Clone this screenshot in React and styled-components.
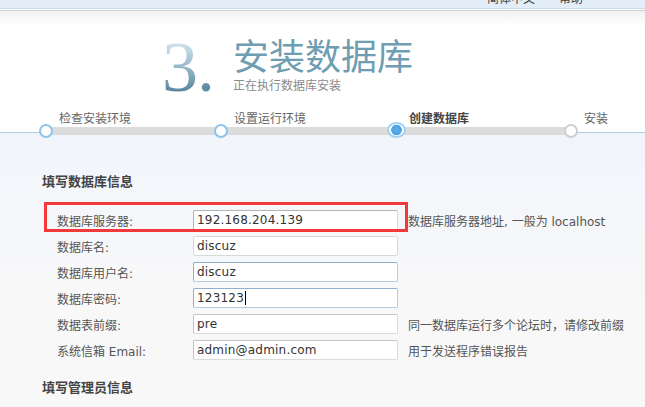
import React from "react";
import styled, { createGlobalStyle, css } from "styled-components";

const GlobalStyle = createGlobalStyle`
  html, body {
    margin: 0;
    padding: 0;
    background: #f8f8f8;
  }
  body {
    font-family: "DejaVu Sans", "Noto Sans CJK SC", sans-serif;
    font-size: 12px;
    color: #555;
  }
`;

const Page = styled.div`
  width: 645px;
  height: 407px;
  overflow: hidden;
`;

// top strip, mostly cut off
const TopBar = styled.div`
  height: 8px;
  background: #e3edf8;
  border-bottom: 1px solid #cddcee;
  overflow: hidden;
  display: flex;
  justify-content: flex-end;
  padding-right: 62px;
  gap: 24px;
`;

const TopLink = styled.span`
  margin-top: -9px;
  line-height: 14px;
  color: #444;
  font-family: "Noto Sans CJK SC", sans-serif;
`;

const Header = styled.div`
  margin-top: 1px;
  height: 121px;
  border-top: 1px solid #d3d3d3;
  border-bottom: 1px solid #aecde4;
  background: linear-gradient(#f2f2f2 0, #ffffff 16px);
  display: flex;
  flex-direction: column;
`;

const TitleBlock = styled.div`
  display: flex;
  align-items: flex-start;
  padding: 20px 0 0 162px;
`;

const Num = styled.div`
  font-family: "Liberation Serif", serif;
  font-size: 72px;
  line-height: 72px;
  letter-spacing: -1px;
  background: linear-gradient(#cfe0ea 18%, #8fb3c6 55%, #4f7f98 88%);
  -webkit-background-clip: text;
  background-clip: text;
  color: transparent;
`;

const TitleText = styled.div`
  margin-left: 19px;
  padding-top: 5px;
  display: flex;
  flex-direction: column;
`;

const Title = styled.h1`
  margin: 0;
  font-family: "Noto Sans CJK SC", sans-serif;
  font-weight: 400;
  font-size: 36px;
  line-height: 36px;
  color: #6f9db1;
`;

const SubTitle = styled.div`
  margin-top: 6px;
  font-family: "Noto Sans CJK SC", sans-serif;
  font-size: 12px;
  line-height: 14px;
  color: #8a8a8a;
`;

const Steps = styled.div`
  position: relative;
  z-index: 1;
  margin-top: auto;
  margin-bottom: -6px;
  height: 28px;
  display: flex;
  padding-left: 39px;

  &::before {
    content: "";
    position: absolute;
    left: 46px;
    width: 525px;
    top: 17px;
    height: 8px;
    background: #dcdcdc;
  }
`;

const Step = styled.div`
  position: relative;
  flex: 0 0 175px;
  display: flex;
  flex-direction: column;
`;

const StepLabel = styled.div`
  padding-left: 20px;
  font-family: "Noto Sans CJK SC", sans-serif;
  font-size: 12px;
  line-height: 16px;
  color: ${(p) => (p.$active ? "#444" : "#666")};
  font-weight: ${(p) => (p.$active ? 700 : 400)};
`;

const Dot = styled.span`
  box-sizing: border-box;
  display: block;
  margin-top: -2px;
  width: 14px;
  height: 14px;
  border-radius: 50%;
  background: #fff;
  border: 2px solid ${(p) => (p.$done ? "#8cc3ea" : "#cfcfcf")};
  ${(p) =>
    p.$active &&
    css`
      width: 19px;
      height: 19px;
      margin: -4px 0 0 -2px;
      border: 2px solid #a6d2f1;
      background: radial-gradient(circle, #5aaeea 0, #4aa3e6 5px, #fff 5.6px);
    `}
`;

const Content = styled.div`
  height: 274px;
  background: linear-gradient(#f1f5fb, #f8f8f8 60%);
  padding: 39px 0 0 42px;
  box-sizing: border-box;
`;

const SectionTitle = styled.h3`
  margin: 0;
  font-family: "Noto Sans CJK SC", sans-serif;
  font-size: 13px;
  line-height: 18px;
  font-weight: 700;
  color: #444;
`;

const Form = styled.div`
  margin: 17px 0 15px;
`;

const Row = styled.div`
  position: relative;
  height: 26px;
  display: flex;
  align-items: center;
`;

const Highlight = styled.div`
  position: absolute;
  left: 2px;
  top: -5px;
  width: 364px;
  height: 30px;
  box-sizing: border-box;
  border: 3px solid #f23a3a;
  pointer-events: none;
`;

const Label = styled.div`
  flex: 0 0 151px;
  padding-left: 15px;
  box-sizing: border-box;
  color: #555;
  white-space: nowrap;
`;

const borders = {
  dark: "#b4b4b4 #d6d6d6 #d6d6d6 #b4b4b4",
  light: "#d8d8d8",
  blue: "#8fb1cf #b5cde0 #b5cde0 #8fb1cf",
  gray: "#c4c4c4 #dadada #dadada #c4c4c4",
};

const Field = styled.div`
  box-sizing: border-box;
  flex: 0 0 205px;
  height: 20px;
  padding: 0 3px;
  border: 1px solid;
  border-color: ${(p) => borders[p.$tone || "gray"]};
  border-radius: 2px;
  background: #fff;
  display: flex;
  align-items: center;
  font-size: 12px;
  color: #333;
  letter-spacing: 0.2px;
`;

const Caret = styled.span`
  width: 1px;
  height: 14px;
  margin-left: 1px;
  background: #000;
`;

const Help = styled.div`
  margin-left: 10px;
  color: #555;
  white-space: nowrap;
`;

const fields = [
  { label: "数据库服务器:", value: "192.168.204.139", tone: "dark", help: "数据库服务器地址, 一般为 localhost", mark: true },
  { label: "数据库名:", value: "discuz", tone: "light" },
  { label: "数据库用户名:", value: "discuz", tone: "blue" },
  { label: "数据库密码:", value: "123123", tone: "blue", caret: true },
  { label: "数据表前缀:", value: "pre", tone: "gray", help: "同一数据库运行多个论坛时，请修改前缀" },
  { label: "系统信箱 Email:", value: "admin@admin.com", tone: "gray", help: "用于发送程序错误报告" },
];

const steps = [
  { label: "检查安装环境", done: true },
  { label: "设置运行环境", done: true },
  { label: "创建数据库", done: true, active: true },
  { label: "安装" },
];

export default function App() {
  return (
    <Page>
      <GlobalStyle />
      <TopBar>
        <TopLink>简体中文</TopLink>
        <TopLink>帮助</TopLink>
      </TopBar>
      <Header>
        <TitleBlock>
          <Num>3.</Num>
          <TitleText>
            <Title>安装数据库</Title>
            <SubTitle>正在执行数据库安装</SubTitle>
          </TitleText>
        </TitleBlock>
        <Steps>
          {steps.map((s) => (
            <Step key={s.label}>
              <StepLabel $active={s.active}>{s.label}</StepLabel>
              <Dot $done={s.done} $active={s.active} />
            </Step>
          ))}
        </Steps>
      </Header>
      <Content>
        <SectionTitle>填写数据库信息</SectionTitle>
        <Form>
          {fields.map((f) => (
            <Row key={f.label}>
              {f.mark && <Highlight />}
              <Label>{f.label}</Label>
              <Field $tone={f.tone}>
                {f.value}
                {f.caret && <Caret />}
              </Field>
              {f.help && <Help>{f.help}</Help>}
            </Row>
          ))}
        </Form>
        <SectionTitle>填写管理员信息</SectionTitle>
      </Content>
    </Page>
  );
}
